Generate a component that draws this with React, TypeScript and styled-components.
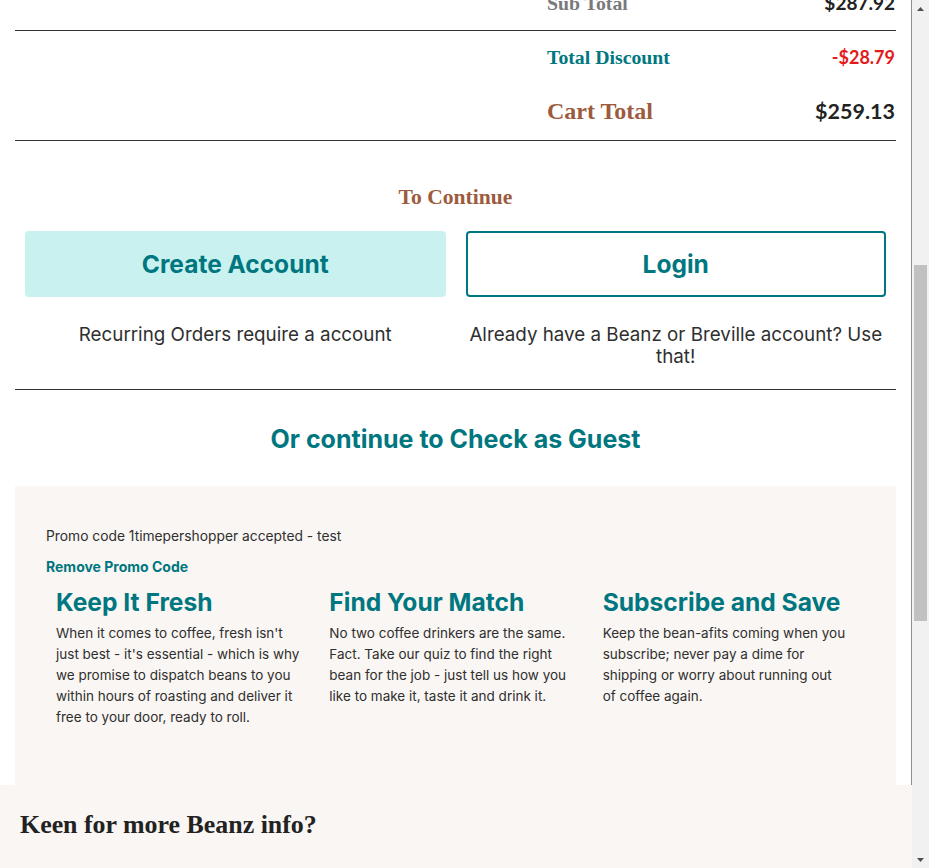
import React, { useLayoutEffect, useRef } from "react";
import styled, { createGlobalStyle } from "styled-components";

const sans = `Inter, "Noto Sans", "DejaVu Sans", sans-serif`;
const slab = `"Liberation Serif", "DejaVu Serif", serif`;
const figures = `Lato, "Liberation Sans", sans-serif`;

const teal = "#007780";
const brown = "#9d5b3d";
const beige = "#f9f6f3";
const ink = "#2f2f2f";

const GlobalStyle = createGlobalStyle`
  html, body { margin: 0; padding: 0; height: 100%; overflow: hidden; background: #fff; }
  #root { height: 100%; }
  body { font-family: ${sans}; color: ${ink}; }
  *, *::before, *::after { box-sizing: border-box; }
`;

/* ---------- window shell with scroll rail ---------- */
const Shell = styled.div`
  display: flex;
  height: 100vh;
`;

const Viewport = styled.div`
  position: relative;
  flex: 1;
  min-width: 0;
  overflow: hidden;
`;

const Rail = styled.div`
  flex: 0 0 17px;
  display: flex;
  flex-direction: column;
  background: #f1f1f1;
`;

const RailButton = styled.div`
  flex: 0 0 17px;
  display: flex;
  align-items: center;
  justify-content: center;
`;

const RailTrack = styled.div`
  flex: 1;
  padding: 248px 2px 0;
`;

const RailThumb = styled.div`
  height: 356px;
  background: #c1c1c1;
`;

const Main = styled.main`
  border-right: 1px solid #8e8e8e;
  padding: 0 15px;
`;

/* ---------- cart (above the fold) ---------- */
const TopBar = styled.header`
  display: flex;
  align-items: center;
  justify-content: space-between;
  height: 72px;
  border-bottom: 1px solid #e2ddd8;
`;

const Logo = styled.span`
  font-family: ${slab};
  font-weight: 700;
  font-size: 30px;
  color: ${teal};
`;

const TopLink = styled.span`
  font-size: 14px;
  color: ${teal};
  font-weight: 600;
`;

const PageTitle = styled.h1`
  margin: 32px 0 24px;
  font-family: ${slab};
  font-size: 30px;
  color: ${ink};
`;

const CartItem = styled.div`
  display: grid;
  grid-template-columns: 90px 1fr auto;
  gap: 20px;
  align-items: center;
  padding: 20px 0;
  border-top: 1px solid #e2ddd8;
`;

const Thumb = styled.div`
  width: 90px;
  height: 90px;
  border-radius: 6px;
  background: #efe7df;
`;

const ItemName = styled.div`
  font-weight: 700;
  font-size: 16px;
  color: ${teal};
`;

const ItemMeta = styled.div`
  margin-top: 6px;
  font-size: 14px;
  color: #555;
`;

const ItemPrice = styled.div`
  font-family: ${figures};
  font-weight: 700;
  font-size: 18px;
`;

/* ---------- summary ---------- */
const SummaryBlock = styled.div<{ $pad: string }>`
  padding: ${(p) => p.$pad};
  border-bottom: 1px solid #333;
  display: flex;
  flex-direction: column;
  gap: 26px;
`;

const SummaryLine = styled.div`
  display: grid;
  grid-template-columns: 1fr 349px;
`;

const SummaryCell = styled.div`
  grid-column: 2;
  display: flex;
  justify-content: space-between;
  align-items: center;
  padding-right: 1px;
`;

const SumLabel = styled.span<{ $tone: "muted" | "teal" | "brown"; $big?: boolean }>`
  font-family: ${slab};
  font-weight: 700;
  font-size: ${(p) => (p.$big ? "24px" : "19.8px")};
  line-height: ${(p) => (p.$big ? "32px" : "24px")};
  color: ${(p) => (p.$tone === "muted" ? "#7a7a7a" : p.$tone === "teal" ? teal : brown)};
`;

const SumValue = styled.span<{ $tone: "dark" | "red"; $big?: boolean }>`
  font-family: ${figures};
  font-weight: 700;
  font-size: ${(p) => (p.$big ? "21.5px" : p.$tone === "red" ? "18px" : "19px")};
  line-height: ${(p) => (p.$big ? "32px" : "24px")};
  color: ${(p) => (p.$tone === "red" ? "#e31b1b" : "#222")};
`;

/* ---------- continue ---------- */
const ContinueTitle = styled.h3`
  margin: 44px 0 0;
  text-align: center;
  font-family: ${slab};
  font-weight: 700;
  font-size: 21.6px;
  line-height: 24px;
  color: ${brown};
`;

const Actions = styled.div`
  display: grid;
  grid-template-columns: 1fr 1fr;
  column-gap: 20px;
  padding: 0 10px 21px;
  margin-top: 22px;
  border-bottom: 1px solid #333;
`;

const ActionCol = styled.div`
  display: flex;
  flex-direction: column;
  align-items: stretch;
`;

const ActionButton = styled.button<{ $variant: "fill" | "outline" }>`
  height: 66px;
  border-radius: 4px;
  font-family: ${sans};
  font-weight: 700;
  font-size: 24.5px;
  color: ${teal};
  cursor: pointer;
  background: ${(p) => (p.$variant === "fill" ? "#c9f1ef" : "#fff")};
  border: ${(p) => (p.$variant === "fill" ? "none" : `2px solid ${teal}`)};
`;

const Caption = styled.p`
  margin: 27px 0 0;
  text-align: center;
  font-size: 18.8px;
  line-height: 22px;
  color: ${ink};
`;

const GuestTitle = styled.h2`
  margin: 34px 0 32px;
  text-align: center;
  font-weight: 700;
  font-size: 25px;
  line-height: 30px;
  color: ${teal};
`;

/* ---------- guest panel ---------- */
const Panel = styled.section`
  background: ${beige};
  padding: 40px 30px 57px 31px;
`;

const PromoNote = styled.p`
  margin: 0;
  font-size: 13.8px;
  line-height: 20px;
  color: ${ink};
`;

const RemoveLink = styled.a`
  display: block;
  margin-top: 12px;
  font-size: 14px;
  line-height: 18px;
  font-weight: 700;
  color: ${teal};
  text-decoration: none;
`;

const Features = styled.div`
  display: grid;
  grid-template-columns: repeat(3, 1fr);
  margin-top: 11px;
`;

const Feature = styled.div`
  padding: 0 10px;
`;

const FeatureTitle = styled.h4`
  margin: 0;
  font-weight: 700;
  font-size: 24.6px;
  line-height: 30px;
  color: ${teal};
`;

const FeatureText = styled.p`
  margin: 6px 0 0;
  font-size: 13.5px;
  line-height: 21px;
  color: ${ink};
`;

/* ---------- footer ---------- */
const Footer = styled.footer`
  background: ${beige};
  padding: 24px 20px 60px;
  min-height: 650px;
`;

const FooterTitle = styled.h2`
  margin: 0;
  font-family: ${slab};
  font-weight: 700;
  font-size: 25.9px;
  line-height: 32px;
  color: #222;
`;

const FooterText = styled.p`
  margin: 48px 0 0;
  font-size: 15px;
  line-height: 22px;
  max-width: 520px;
`;

const FooterLinks = styled.div`
  display: grid;
  grid-template-columns: repeat(3, 1fr);
  gap: 20px;
  margin-top: 40px;
`;

const FooterLink = styled.div`
  font-size: 14px;
  line-height: 28px;
  color: ${teal};
`;

const items = [
  { name: "Ona Coffee — Raspberry Candy", meta: "250g · Whole bean · Qty 2", price: "$47.90" },
  { name: "Single O — Reservoir Espresso", meta: "1kg · Ground for espresso · Qty 1", price: "$64.00" },
  { name: "Market Lane — Seasonal Blend", meta: "250g · Filter · Recurring every 2 weeks", price: "$176.02" },
];

const features = [
  {
    title: "Keep It Fresh",
    text: "When it comes to coffee, fresh isn't just best - it's essential - which is why we promise to dispatch beans to you within hours of roasting and deliver it free to your door, ready to roll.",
  },
  {
    title: "Find Your Match",
    text: "No two coffee drinkers are the same. Fact. Take our quiz to find the right bean for the job - just tell us how you like to make it, taste it and drink it.",
  },
  {
    title: "Subscribe and Save",
    text: "Keep the bean-afits coming when you subscribe; never pay a dime for shipping or worry about running out of\u00a0coffee again.",
  },
];

const ArrowUp = () => (
  <svg width="7" height="4" viewBox="0 0 7 4" aria-hidden="true">
    <polygon points="3.5,0 7,4 0,4" fill="#505050" />
  </svg>
);

const ArrowDown = () => (
  <svg width="7" height="4" viewBox="0 0 7 4" aria-hidden="true">
    <polygon points="0,0 7,0 3.5,4" fill="#505050" />
  </svg>
);

export default function App() {
  const viewRef = useRef<HTMLDivElement>(null);
  const anchorRef = useRef<HTMLDivElement>(null);

  useLayoutEffect(() => {
    const s = viewRef.current;
    const a = anchorRef.current;
    if (!s || !a) return;
    const place = () => {
      s.scrollTop = a.offsetTop + a.offsetHeight - 31;
    };
    place();
    const id = requestAnimationFrame(place);
    return () => cancelAnimationFrame(id);
  }, []);

  return (
    <>
      <GlobalStyle />
      <Shell>
        <Viewport ref={viewRef}>
          <Main>
            <TopBar>
              <Logo>beanz</Logo>
              <TopLink>Continue shopping</TopLink>
            </TopBar>
            <PageTitle>Your Cart</PageTitle>
            {items.map((it) => (
              <CartItem key={it.name}>
                <Thumb />
                <div>
                  <ItemName>{it.name}</ItemName>
                  <ItemMeta>{it.meta}</ItemMeta>
                </div>
                <ItemPrice>{it.price}</ItemPrice>
              </CartItem>
            ))}

            <SummaryBlock ref={anchorRef} $pad="20px 0 15px">
              <SummaryLine>
                <SummaryCell>
                  <SumLabel $tone="muted">Sub Total</SumLabel>
                  <SumValue $tone="dark">$287.92</SumValue>
                </SummaryCell>
              </SummaryLine>
            </SummaryBlock>

            <SummaryBlock $pad="14px 0 13px">
              <SummaryLine>
                <SummaryCell>
                  <SumLabel $tone="teal">Total Discount</SumLabel>
                  <SumValue $tone="red">-$28.79</SumValue>
                </SummaryCell>
              </SummaryLine>
              <SummaryLine>
                <SummaryCell>
                  <SumLabel $tone="brown" $big>Cart Total</SumLabel>
                  <SumValue $tone="dark" $big>$259.13</SumValue>
                </SummaryCell>
              </SummaryLine>
            </SummaryBlock>

            <ContinueTitle>To Continue</ContinueTitle>
            <Actions>
              <ActionCol>
                <ActionButton $variant="fill">Create Account</ActionButton>
                <Caption>Recurring Orders require a account</Caption>
              </ActionCol>
              <ActionCol>
                <ActionButton $variant="outline">Login</ActionButton>
                <Caption>Already have a Beanz or Breville account? Use that!</Caption>
              </ActionCol>
            </Actions>

            <GuestTitle>Or continue to Check as Guest</GuestTitle>

            <Panel>
              <PromoNote>Promo code 1timepershopper accepted - test</PromoNote>
              <RemoveLink href="#">Remove Promo Code</RemoveLink>
              <Features>
                {features.map((f) => (
                  <Feature key={f.title}>
                    <FeatureTitle>{f.title}</FeatureTitle>
                    <FeatureText>{f.text}</FeatureText>
                  </Feature>
                ))}
              </Features>
            </Panel>
          </Main>

          <Footer>
            <FooterTitle>Keen for more Beanz info?</FooterTitle>
            <FooterText>
              Sign up for the latest coffee news, roaster stories and exclusive offers, delivered straight to your inbox.
            </FooterText>
            <FooterLinks>
              <div>
                <FooterLink>About Beanz</FooterLink>
                <FooterLink>Our Roasters</FooterLink>
                <FooterLink>Coffee Quiz</FooterLink>
              </div>
              <div>
                <FooterLink>Help Centre</FooterLink>
                <FooterLink>Shipping</FooterLink>
                <FooterLink>Contact Us</FooterLink>
              </div>
              <div>
                <FooterLink>Privacy Policy</FooterLink>
                <FooterLink>Terms of Use</FooterLink>
                <FooterLink>Breville</FooterLink>
              </div>
            </FooterLinks>
          </Footer>
        </Viewport>
        <Rail aria-hidden="true">
          <RailButton>
            <ArrowUp />
          </RailButton>
          <RailTrack>
            <RailThumb />
          </RailTrack>
          <RailButton>
            <ArrowDown />
          </RailButton>
        </Rail>
      </Shell>
    </>
  );
}
